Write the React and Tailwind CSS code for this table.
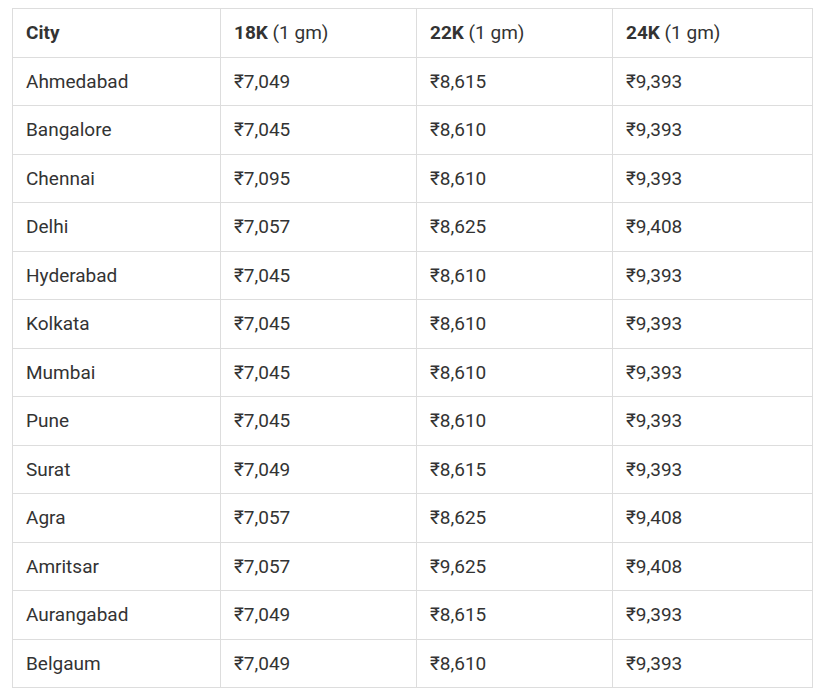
const rows = [
  ["Ahmedabad", "₹7,049", "₹8,615", "₹9,393"],
  ["Bangalore", "₹7,045", "₹8,610", "₹9,393"],
  ["Chennai", "₹7,095", "₹8,610", "₹9,393"],
  ["Delhi", "₹7,057", "₹8,625", "₹9,408"],
  ["Hyderabad", "₹7,045", "₹8,610", "₹9,393"],
  ["Kolkata", "₹7,045", "₹8,610", "₹9,393"],
  ["Mumbai", "₹7,045", "₹8,610", "₹9,393"],
  ["Pune", "₹7,045", "₹8,610", "₹9,393"],
  ["Surat", "₹7,049", "₹8,615", "₹9,393"],
  ["Agra", "₹7,057", "₹8,625", "₹9,408"],
  ["Amritsar", "₹7,057", "₹9,625", "₹9,408"],
  ["Aurangabad", "₹7,049", "₹8,615", "₹9,393"],
  ["Belgaum", "₹7,049", "₹8,610", "₹9,393"],
];

export default function App() {
  const cell = "border border-[#dddddd] pl-[13px] pr-2 py-[10px] leading-[27.5px] text-left align-middle";
  return (
    <div className="bg-white w-[826px] h-[696px] pt-[8px] pl-[12px] font-['Roboto',sans-serif] text-[19px] text-[#333333]">
      <table className="border-collapse w-[800px] table-fixed">
        <colgroup>
          <col className="w-[208px]" />
          <col className="w-[196px]" />
          <col className="w-[196px]" />
          <col className="w-[200px]" />
        </colgroup>
        <thead>
          <tr>
            <th className={cell + " font-bold"}>City</th>
            <th className={cell + " font-normal"}><b className="font-bold">18K</b> (1 gm)</th>
            <th className={cell + " font-normal"}><b className="font-bold">22K</b> (1 gm)</th>
            <th className={cell + " font-normal"}><b className="font-bold">24K</b> (1 gm)</th>
          </tr>
        </thead>
        <tbody>
          {rows.map((r) => (
            <tr key={r[0]}>
              {r.map((c, i) => (
                <td key={i} className={cell}>{c}</td>
              ))}
            </tr>
          ))}
        </tbody>
      </table>
    </div>
  );
}
